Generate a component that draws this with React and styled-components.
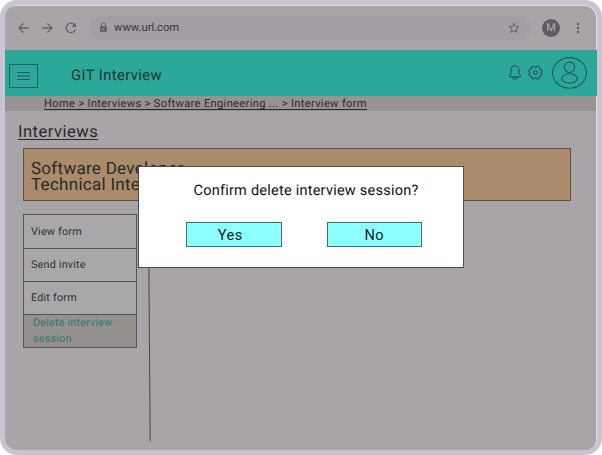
import React from "react";
import styled, { createGlobalStyle } from "styled-components";

const GlobalStyle = createGlobalStyle`
  * { box-sizing: border-box; }
  body { margin: 0; background: #fff; font-family: Roboto, "Liberation Sans", sans-serif; color: #2b292c; text-rendering: geometricPrecision; }
  button { font: inherit; color: inherit; padding: 0; background: none; border: 0; }
`;

const Frame = styled.div`
  position: relative;
  width: 602px;
  height: 455px;
  padding: 5px;
  border-radius: 17px;
  background: #cac4d0;
  overflow: hidden;
`;

const Screen = styled.main`
  height: 445px;
  width: 592px;
  border-radius: 12px;
  background: #a8a4a7;
  box-shadow: inset -1px 1px 0 #e2dfe5;
  overflow: hidden;
`;

const BrowserBar = styled.div`
  display: flex;
  align-items: center;
  height: 45px;
  padding-left: 12px;
  color: #656166;
`;

const Glyph = styled.svg`
  display: block;
  flex: none;
  width: ${(p) => p.$w}px;
  height: ${(p) => p.$h || p.$w}px;
  margin-left: ${(p) => p.$gap || 0}px;
  fill: none;
  stroke: currentColor;
  stroke-width: ${(p) => p.$stroke || 1.3};
`;

const AddressBar = styled.div`
  display: flex;
  align-items: center;
  width: 442px;
  height: 24px;
  margin-left: 11px;
  padding: 0 11px 0 9px;
  border-radius: 12px;
  background: #a29ea3;
`;

const Url = styled.span`
  flex: 1;
  margin-left: 5px;
  font-size: 11.2px;
  letter-spacing: 0;
  color: #39363b;
`;

const Initial = styled.div`
  display: grid;
  place-items: center;
  width: 18px;
  height: 18px;
  margin-left: 11px;
  border-radius: 50%;
  background: #5f5b60;
  color: #b5b1b6;
  font-size: 11px;
  line-height: 18px;
`;

const Header = styled.header`
  display: flex;
  align-items: center;
  height: 46px;
  width: 592px;
  padding: 0 10px 0 4px;
  background: #2ba89a;
  color: #245a57;
`;

const MenuButton = styled.button`
  display: grid;
  place-items: center;
  width: 29px;
  height: 24px;
  margin-top: 5px;
  border: 1px solid #25605b;
`;

const AppTitle = styled.h1`
  flex: 1;
  margin: 4px 0 0 33px;
  font-size: 14.8px;
  font-weight: 400;
  letter-spacing: 0.4px;
  color: #1f3534;
`;

const Breadcrumb = styled.nav`
  height: 15px;
  width: 591px;
  padding-left: 39px;
  background: #969393;
  font-size: 11.1px;
  line-height: 15px;
  letter-spacing: 0.34px;
  text-decoration: underline;
  text-underline-offset: 2px;
  text-decoration-thickness: 1px;
  white-space: nowrap;
`;

const PageTitle = styled.h2`
  margin: 12px 0 0 13px;
  font-size: 16.5px;
  line-height: 20px;
  font-weight: 400;
  letter-spacing: 0.5px;
  text-decoration: underline;
  text-underline-offset: 2px;
  text-decoration-thickness: 1px;
`;

const Banner = styled.section`
  width: 548px;
  height: 53px;
  margin: 5px 0 0 18px;
  padding: 12px 0 0 7px;
  border: 1px solid #5e5144;
  background: #aa8b6c;
  font-size: 17px;
  line-height: 16px;
  letter-spacing: 0.28px;
`;

const Workspace = styled.div`
  display: flex;
  height: 241px;
  padding: 13px 0 0 18px;
`;

const SideMenu = styled.ul`
  width: 114px;
  height: 134px;
  margin: 0;
  padding: 0;
  list-style: none;
  border: 1px solid #565355;
`;

const MenuItem = styled.li`
  display: flex;
  align-items: center;
  height: 33px;
  padding-left: ${(p) => (p.$active ? 9 : 7)}px;
  border-top: ${(p) => (p.$first ? 0 : 1)}px solid #565355;
  background: ${(p) => (p.$active ? "#95918f" : "#a9a8a9")};
  color: ${(p) => (p.$active ? "#2d7771" : "#302e31")};
  font-size: 10.8px;
  line-height: 16px;
  letter-spacing: 0.2px;
`;

const Dialog = styled.div`
  position: absolute;
  left: 138px;
  top: 166px;
  width: 326px;
  height: 102px;
  padding-top: 15px;
  border: 1px solid #4c4b4c;
  background: #fff;
  color: #111;
  text-align: center;
`;

const Question = styled.p`
  margin: 0 0 0 10px;
  font-size: 14.5px;
  line-height: 18px;
  letter-spacing: 0.24px;
`;

const Actions = styled.div`
  display: flex;
  gap: 45px;
  margin: 22px 0 0 47px;
`;

const ActionButton = styled.button`
  width: 95.5px;
  height: 25px;
  padding-right: ${(p) => p.$shift || 0}px;
  border: 1px solid #456e6f;
  background: #8cffff;
  color: #151d1d;
  font-size: 14.6px;
  letter-spacing: 0.4px;
`;

const ITEMS = ["View form", "Send invite", "Edit form", "Delete interview session"];

export default function App() {
  return (
    <>
      <GlobalStyle />
      <Frame>
        <Screen>
          <BrowserBar>
            <Glyph $w={14} viewBox="0 0 14 14"><path d="M12 7H2M6.600 2.400 2 7l4.600 4.600" /></Glyph>
            <Glyph $w={14} $gap={10} viewBox="0 0 14 14"><path d="M1 7h10M6.400 2.400 11 7l-4.600 4.600" /></Glyph>
            <Glyph $w={14} $gap={9} viewBox="0 0 14 14">
              <path d="M10.600 4A4.700 4.700 0 1 0 11.300 8.500" />
              <path d="M12 1.800V6H7.800z" fill="currentColor" stroke="none" />
            </Glyph>
            <AddressBar>
              <Glyph $w={11} $stroke={1} viewBox="0 0 11 11">
                <path d="M3.500 5V3.200a2 2 0 0 1 4 0V5" />
                <rect x="2" y="4.200" width="7" height="5.800" rx="0.7" fill="currentColor" stroke="none" />
                <circle cx="5.5" cy="7.2" r="0.8" fill="#a29ea3" stroke="none" />
              </Glyph>
              <Url>www.url.com</Url>
              <Glyph $w={12} $stroke={1} viewBox="0 0 12 12">
                <path d="m6 1.200 1.350 3.200 3.450.3-2.600 2.250.8 3.400L6 8.550l-3 1.800.8-3.400L1.200 4.700l3.450-.3z" />
              </Glyph>
            </AddressBar>
            <Initial>M</Initial>
            <Glyph $w={4} $h={14} $gap={16} viewBox="0 0 4 14">
              <g fill="currentColor" stroke="none">
                <circle cx="2" cy="3" r="1.3" /><circle cx="2" cy="7" r="1.3" /><circle cx="2" cy="11" r="1.3" />
              </g>
            </Glyph>
          </BrowserBar>
          <Header>
            <MenuButton aria-label="Menu">
              <Glyph $w={13} $h={10} $stroke={1} viewBox="0 0 13 10"><path d="M0 1.500h13M0 5h13M0 8.500h13" /></Glyph>
            </MenuButton>
            <AppTitle>GIT Interview</AppTitle>
            <Glyph $w={14} $h={18} $stroke={1.1} viewBox="0 0.500 14 18">
              <path d="M7 2.200a4 4 0 0 0-4 4V9c0 2-1.700 2.700-1.700 3.800 0 .4.3.6.7.6h10c.4 0 .7-.2.7-.6C12.700 11.700 11 11 11 9V6.200a4 4 0 0 0-4-4zM4.800 13.500a2.200 2.200 0 0 0 4.400 0" />
            </Glyph>
            <Glyph $w={15} $gap={6} $stroke={1.2} viewBox="0 1 16 16">
              <path d="M4.300 1.500 6.300 1.300 8 2.900 9.700 1.300 11.700 1.500 12.300 4.100 14.500 4.800 15.200 6.500 13.400 8 15.200 9.500 14.500 11.200 12.300 11.900 11.700 14.500 9.700 14.700 8 13.100 6.300 14.700 4.300 14.500 3.700 11.900 1.500 11.200 .8 9.500 2.600 8 .8 6.500 1.500 4.800 3.700 4.100z" strokeLinejoin="round" />
              <circle cx="8" cy="8" r="2" />
            </Glyph>
            <Glyph $w={35} $h={32} $gap={9} $stroke={1.1} viewBox="0 0.500 35 32">
              <ellipse cx="17.500" cy="16.400" rx="16.900" ry="15.300" />
              <circle cx="17.500" cy="10.800" r="5.200" />
              <ellipse cx="17.500" cy="22" rx="7.800" ry="4.700" />
            </Glyph>
          </Header>
          <Breadcrumb>Home &gt; Interviews &gt; Software Engineering ... &gt; Interview form</Breadcrumb>
          <PageTitle>Interviews</PageTitle>
          <Banner>Software Developer<br />Technical Interview</Banner>
          <Workspace>
            <SideMenu>
              {ITEMS.map((label, i) => (
                <MenuItem key={label} $first={i === 0} $active={i === 3}>{label}</MenuItem>
              ))}
            </SideMenu>
            <Glyph $w={4} $h={227} $gap={10} $stroke={1} viewBox="0 0 4 227">
              <path d="M1.500 0 3.200 227" stroke="#4a474a" />
            </Glyph>
          </Workspace>
        </Screen>
        <Dialog role="dialog">
          <Question>Confirm delete interview session?</Question>
          <Actions>
            <ActionButton $shift={7}>Yes</ActionButton>
            <ActionButton>No</ActionButton>
          </Actions>
        </Dialog>
      </Frame>
    </>
  );
}
